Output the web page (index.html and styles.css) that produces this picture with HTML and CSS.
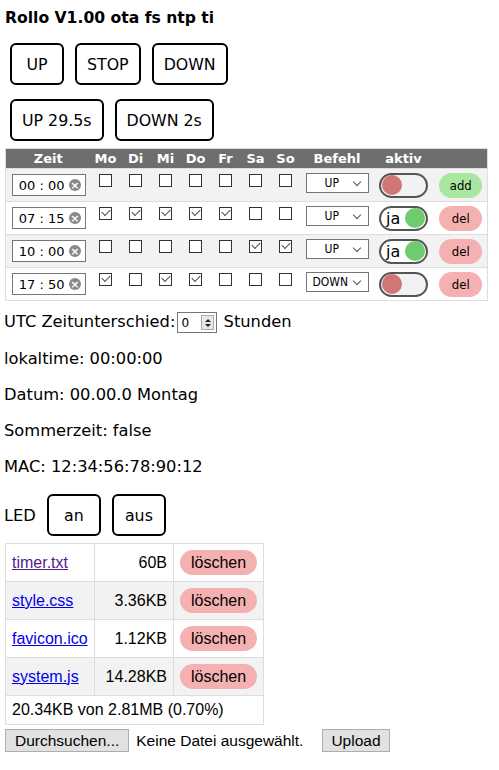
FILE: index.html
```html
<!DOCTYPE html>
<html>
<head>
<meta charset="utf-8">
<link rel="stylesheet" href="styles.css">
</head>
<body>
<h1 class="title">Rollo V1.00 ota fs ntp ti</h1>
<div class="btnrow">
  <button class="big">UP</button>
  <button class="big">STOP</button>
  <button class="big">DOWN</button>
</div>
<div class="btnrow">
  <button class="big">UP 29.5s</button>
  <button class="big">DOWN 2s</button>
</div>

<table class="timer">
  <colgroup>
    <col class="c-zeit"><col class="c-day"><col class="c-day"><col class="c-day"><col class="c-day"><col class="c-day"><col class="c-day"><col class="c-day"><col class="c-bef"><col class="c-akt"><col class="c-btn">
  </colgroup>
  <thead>
    <tr><th>Zeit</th><th>Mo</th><th>Di</th><th>Mi</th><th>Do</th><th>Fr</th><th>Sa</th><th>So</th><th>Befehl</th><th>aktiv</th><th></th></tr>
  </thead>
  <tbody>
    <tr>
      <td><span class="time">00 : 00<i class="clr">×</i></span></td>
      <td><span class="cb"></span></td><td><span class="cb"></span></td><td><span class="cb"></span></td><td><span class="cb"></span></td><td><span class="cb"></span></td><td><span class="cb"></span></td><td><span class="cb"></span></td>
      <td><span class="sel">UP</span></td>
      <td><span class="tog off"><i class="knob"></i></span></td>
      <td><span class="pill add">add</span></td>
    </tr>
    <tr>
      <td><span class="time">07 : 15<i class="clr">×</i></span></td>
      <td><span class="cb on"></span></td><td><span class="cb on"></span></td><td><span class="cb on"></span></td><td><span class="cb on"></span></td><td><span class="cb on"></span></td><td><span class="cb"></span></td><td><span class="cb"></span></td>
      <td><span class="sel">UP</span></td>
      <td><span class="tog on">ja<i class="knob"></i></span></td>
      <td><span class="pill del">del</span></td>
    </tr>
    <tr>
      <td><span class="time">10 : 00<i class="clr">×</i></span></td>
      <td><span class="cb"></span></td><td><span class="cb"></span></td><td><span class="cb"></span></td><td><span class="cb"></span></td><td><span class="cb"></span></td><td><span class="cb on"></span></td><td><span class="cb on"></span></td>
      <td><span class="sel">UP</span></td>
      <td><span class="tog on">ja<i class="knob"></i></span></td>
      <td><span class="pill del">del</span></td>
    </tr>
    <tr>
      <td><span class="time">17 : 50<i class="clr">×</i></span></td>
      <td><span class="cb on"></span></td><td><span class="cb"></span></td><td><span class="cb on"></span></td><td><span class="cb on"></span></td><td><span class="cb"></span></td><td><span class="cb"></span></td><td><span class="cb"></span></td>
      <td><span class="sel down">DOWN</span></td>
      <td><span class="tog off"><i class="knob"></i></span></td>
      <td><span class="pill del">del</span></td>
    </tr>
  </tbody>
</table>

<p class="line first">UTC Zeitunterschied:<span class="num">0<span class="spin"><i class="up"></i><i class="dn"></i></span></span> Stunden</p>
<p class="line">lokaltime: 00:00:00</p>
<p class="line">Datum: 00.00.0 Montag</p>
<p class="line">Sommerzeit: false</p>
<p class="line">MAC: 12:34:56:78:90:12</p>

<div class="led">
  <span class="ledlbl">LED</span>
  <button class="big">an</button>
  <button class="big">aus</button>
</div>

<table class="files">
  <tr><td><a class="visited" href="#">timer.txt</a></td><td class="size">60B</td><td><span class="pill lo">löschen</span></td></tr>
  <tr class="alt"><td><a href="#">style.css</a></td><td class="size">3.36KB</td><td><span class="pill lo">löschen</span></td></tr>
  <tr><td><a href="#">favicon.ico</a></td><td class="size">1.12KB</td><td><span class="pill lo">löschen</span></td></tr>
  <tr class="alt"><td><a href="#">system.js</a></td><td class="size">14.28KB</td><td><span class="pill lo">löschen</span></td></tr>
  <tr><td colspan="3" class="total">20.34KB von 2.81MB (0.70%)</td></tr>
</table>

<div class="upload">
  <span class="gbtn">Durchsuchen...</span>
  <span class="none">Keine Datei ausgewählt.</span>
  <span class="gbtn up">Upload</span>
</div>
</body>
</html>
```

FILE: styles.css
```css
html, body {
  margin: 0;
  background: #fff;
}
body {
  padding: 5px 4px;
  font-family: "DejaVu Sans", sans-serif;
  font-size: 16.3px;
  color: #000;
}
.title {
  font-family: "DejaVu Sans", sans-serif;
  font-weight: bold;
  font-size: 15.6px;
  margin: 0 0 0 1px;
  line-height: 26px;
}
.btnrow {
  display: flex;
  gap: 11px;
  padding-left: 6px;
  margin-top: 12px;
}
.btnrow + .btnrow {
  margin-top: 14px;
}
.big {
  font-family: "DejaVu Sans", sans-serif;
  font-size: 15.8px;
  height: 42px;
  min-width: 54px;
  padding: 0 10px;
  background: #fff;
  border: 2px solid #000;
  border-radius: 6px;
  color: #000;
}

/* timer table */
.timer {
  border-collapse: collapse;
  margin: 7px 0 0 1px;
  width: 482px;
  table-layout: fixed;
  border: 1px solid #ddd;
}
.c-zeit { width: 85px; }
.c-day { width: 30px; }
.c-bef { width: 73px; }
.c-akt { width: 60px; }
.c-btn { width: 54px; }
.timer th {
  background: #6e6e6e;
  color: #fff;
  font-family: "DejaVu Sans", sans-serif;
  font-weight: bold;
  font-size: 13px;
  height: 19px;
  padding: 0;
  text-align: center;
}
.timer td {
  height: 32px;
  padding: 0;
  text-align: center;
  vertical-align: middle;
  border-top: 1px solid #ddd;
}
.timer tbody tr:nth-child(odd) td { background: #f2f2f2; }
.timer tbody tr:nth-child(even) td { background: #fff; }

.time {
  display: inline-flex;
  align-items: center;
  justify-content: space-between;
  box-sizing: border-box;
  width: 74px;
  height: 22px;
  padding: 0 4px 0 6px;
  border: 1px solid #767676;
  background: #fff;
  font-family: "DejaVu Sans", sans-serif;
  font-size: 13px;
  margin-left: 1px;
}
.clr {
  display: inline-flex;
  align-items: center;
  justify-content: center;
  width: 12px;
  height: 12px;
  border-radius: 50%;
  background: #888;
  color: #fff;
  font-style: normal;
  font-weight: bold;
  font-size: 11px;
  line-height: 1;
}
.cb {
  display: inline-block;
  box-sizing: border-box;
  width: 13px;
  height: 13px;
  border: 1px solid #333;
  background: #fff;
  position: relative;
  top: -4px;
}
.cb.on::after {
  content: "";
  position: absolute;
  left: 2px;
  top: 1px;
  width: 7px;
  height: 4px;
  border-left: 1px solid #444;
  border-bottom: 1px solid #444;
  transform: rotate(-45deg);
}
.sel {
  display: inline-flex;
  align-items: center;
  box-sizing: border-box;
  width: 63px;
  height: 20px;
  border: 1px solid #767676;
  background: #fff;
  font-family: "DejaVu Sans Condensed", "DejaVu Sans", sans-serif;
  font-size: 12px;
  padding-left: 18px;
  position: relative;
  top: -3px;
}
.sel.down { padding-left: 6px; }
.sel::after {
  content: "";
  position: absolute;
  right: 8px;
  top: 5px;
  width: 5px;
  height: 5px;
  border-right: 1px solid #555;
  border-bottom: 1px solid #555;
  transform: rotate(45deg);
}
.tog {
  display: inline-flex;
  align-items: center;
  box-sizing: border-box;
  width: 49px;
  height: 25px;
  border: 2px solid #555;
  border-radius: 13px;
  background: #f2f2f2;
  padding: 0 1px;
  font-size: 16px;
  vertical-align: middle;
}
.tog.on {
  background: #fff;
  justify-content: space-between;
  padding-left: 5px;
}
.knob {
  width: 20px;
  height: 20px;
  border-radius: 50%;
  display: block;
}
.tog.off .knob { background: #d07676; }
.tog.on .knob { background: #6ecb6e; }
.pill {
  display: inline-flex;
  align-items: center;
  justify-content: center;
  height: 25px;
  border-radius: 13px;
  color: #000;
  vertical-align: middle;
}
.add, .del {
  width: 43px;
  font-family: "DejaVu Sans Condensed", "DejaVu Sans", sans-serif;
  font-size: 13px;
  margin-left: 1px;
}
.add { background: #a9e6a0; }
.del { background: #f5b1b1; }

/* text lines */
.line {
  margin: 16px 0 0 0;
  line-height: 20px;
}
.line.first { margin-top: 11px; }
.num {
  display: inline-flex;
  align-items: center;
  justify-content: space-between;
  box-sizing: border-box;
  width: 40px;
  height: 21px;
  border: 1px solid #767676;
  font-size: 12px;
  padding: 0 2px 0 3px;
  vertical-align: middle;
  margin: 0 1px 0 2px;
}
.spin {
  display: flex;
  flex-direction: column;
  box-sizing: border-box;
  width: 13px;
  height: 15px;
  border: 1px solid #aaa;
  background: #e8e8e8;
  align-items: center;
  justify-content: center;
  gap: 2px;
}
.spin i {
  width: 0;
  height: 0;
  border-left: 3px solid transparent;
  border-right: 3px solid transparent;
}
.spin .up { border-bottom: 3px solid #222; }
.spin .dn { border-top: 3px solid #222; }

.led {
  display: flex;
  align-items: center;
  gap: 11px;
  margin-top: 17px;
}
.led .big { padding: 0 8px; }

/* files */
.files {
  border-collapse: collapse;
  margin: 7px 0 0 1px;
  width: 259px;
  border: 1px solid #ddd;
  font-family: "Liberation Sans", Arial, sans-serif;
  font-size: 16px;
}
.files td {
  border: 1px solid #ddd;
  height: 37px;
  padding: 0 6px;
}
.files tr.alt td { background: #f2f2f2; }
.files td:nth-child(1) { width: 75px; }
.files td:nth-child(2) { width: 67px; }
.files .size { text-align: right; }
.files .total { height: 28px; }
.files a { color: #0000ee; }
.files a.visited { color: #551a8b; }
.lo {
  width: 77px;
  background: #f5b1b1;
}
.upload {
  display: flex;
  align-items: center;
  margin-top: 4px;
  margin-left: 1px;
  font-family: "Liberation Sans", Arial, sans-serif;
  font-size: 15.5px;
}
.gbtn {
  display: inline-flex;
  align-items: center;
  box-sizing: border-box;
  height: 23px;
  padding: 0 9px;
  background: #e1e1e1;
  border: 1px solid #adadad;
}
.none { margin-left: 7px; }
.gbtn.up { margin-left: 19px; padding: 0 8px; }
```
